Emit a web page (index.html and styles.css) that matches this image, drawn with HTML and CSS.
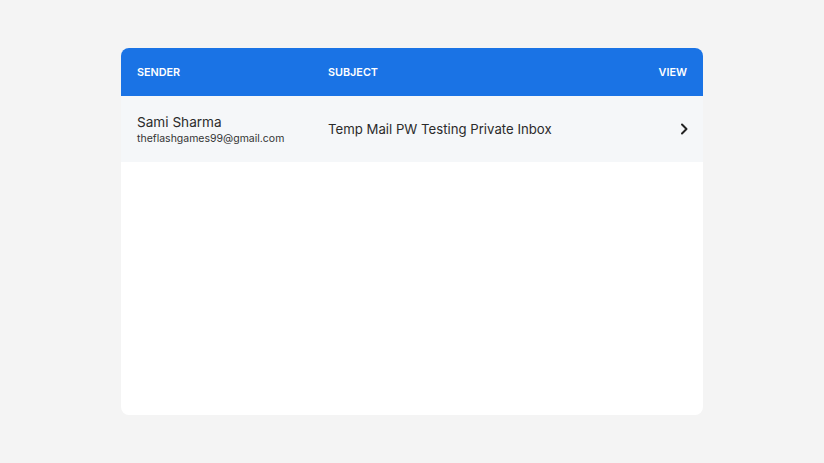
FILE: index.html
```html
<!DOCTYPE html>
<html>
<head>
<meta charset="utf-8">
<link rel="stylesheet" href="styles.css">
</head>
<body>
<div class="card">
  <div class="head">
    <div class="h-sender">SENDER</div>
    <div class="h-subject">SUBJECT</div>
    <div class="h-view">VIEW</div>
  </div>
  <div class="row">
    <div class="sender">
      <div class="name">Sami Sharma</div>
      <div class="email">theflashgames99@gmail.com</div>
    </div>
    <div class="subject">Temp Mail PW Testing Private Inbox</div>
    <div class="view">
      <svg width="10" height="12" viewBox="0 0 10 12"><path d="M3 1.5 L7.5 6 L3 10.5" fill="none" stroke="#222" stroke-width="2" stroke-linecap="round" stroke-linejoin="round"/></svg>
    </div>
  </div>
</div>
</body>
</html>
```
FILE: styles.css
```css
html, body {
  margin: 0;
  padding: 0;
  background: #f4f4f4;
}
body {
  padding-top: 48px;
  font-family: Inter, "Noto Sans", sans-serif;
}
.card {
  width: 582px;
  height: 367px;
  margin: 0 auto;
  background: #fff;
  border-radius: 8px;
  overflow: hidden;
}
.head, .row {
  display: grid;
  grid-template-columns: 191px 1fr auto;
  align-items: center;
  padding: 0 16px;
}
.head {
  height: 48px;
  background: #1a73e5;
  color: #fff;
  font-size: 10.8px;
  font-weight: 600;
}
.row {
  height: 66px;
  background: #f5f7f9;
  color: #2b2b2b;
}
.name {
  font-size: 13.6px;
  line-height: 17px;
  margin-top: 1px;
}
.email {
  font-size: 10.5px;
  line-height: 14px;
  color: #333;
  margin-top: 1px;
}
.subject {
  font-size: 13.2px;
}
.view {
  display: flex;
  align-items: center;
  margin-right: -2px;
}
```
